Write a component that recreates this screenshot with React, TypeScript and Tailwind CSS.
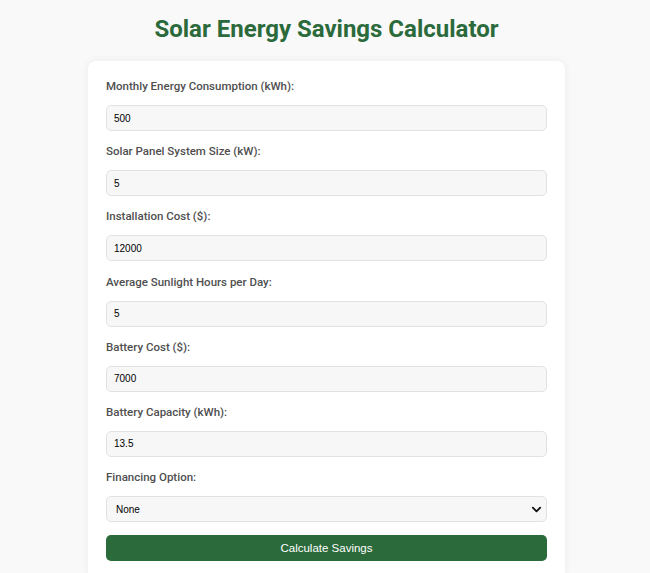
import React, { useState } from 'react';

const fields = [
    { id: 'consumption', label: 'Monthly Energy Consumption (kWh):', value: '500' },
    { id: 'size', label: 'Solar Panel System Size (kW):', value: '5' },
    { id: 'cost', label: 'Installation Cost ($):', value: '12000' },
    { id: 'sunlight', label: 'Average Sunlight Hours per Day:', value: '5' },
    { id: 'battery', label: 'Battery Cost ($):', value: '7000' },
    { id: 'capacity', label: 'Battery Capacity (kWh):', value: '13.5' },
];

const App: React.FC = () => {
    const [values, setValues] = useState<Record<string, string>>(
        Object.fromEntries(fields.map((f) => [f.id, f.value]))
    );
    const [financing, setFinancing] = useState<string>('none');

    return (
        <div className="min-h-screen bg-[#f9f9f9] pt-[14px] pl-[3px]" style={{ fontFamily: 'Roboto, "Liberation Sans", sans-serif' }}>
            <h1 className="text-center text-[24px] leading-[30px] font-bold text-[#2b6a3b]">Solar Energy Savings Calculator</h1>
            <div className="mx-auto mt-[17px] w-[477px] bg-white rounded-[8px] shadow-[0_0_8px_rgba(0,0,0,0.06)] px-[18px] pt-[17px] pb-[20px]">
                {fields.map((f) => (
                    <div key={f.id} className="mb-[12.2px]">
                        <label htmlFor={f.id} className="block text-[11.5px] leading-[16px] font-medium text-[#4f4f4f] mb-[11px]">{f.label}</label>
                        <input
                            id={f.id}
                            type="number"
                            value={values[f.id]}
                            onChange={(e) => setValues({ ...values, [f.id]: e.target.value })}
                            className="block w-full h-[26px] px-[7px] bg-[#f7f7f7] border border-[#e2e2e2] rounded-[5px] text-[10px] text-black outline-none [appearance:textfield] [&::-webkit-inner-spin-button]:appearance-none"
                            style={{ fontFamily: '"Liberation Sans", Arial, sans-serif' }}
                        />
                    </div>
                ))}
                <div className="mb-[13px]">
                    <label htmlFor="financing" className="block text-[11.5px] leading-[16px] font-medium text-[#4f4f4f] mb-[11px]">Financing Option:</label>
                    <div className="relative">
                        <select
                            id="financing"
                            value={financing}
                            onChange={(e) => setFinancing(e.target.value)}
                            className="block w-full h-[26px] pl-[9px] bg-[#f7f7f7] border border-[#e2e2e2] rounded-[5px] text-[10px] text-black outline-none appearance-none"
                            style={{ fontFamily: '"Liberation Sans", Arial, sans-serif' }}
                        >
                            <option value="none">None</option>
                            <option value="loan">Loan</option>
                            <option value="lease">Lease</option>
                        </select>
                        <svg className="absolute right-[5px] top-[8px] pointer-events-none" width="11" height="11" viewBox="0 0 12 12">
                            <path d="M2 4 L6 8 L10 4" fill="none" stroke="#111" strokeWidth="2" strokeLinecap="round" strokeLinejoin="round" />
                        </svg>
                    </div>
                </div>
                <button
                    type="button"
                    className="block w-full h-[26px] bg-[#2b6a3b] text-white text-[11.5px] rounded-[5px]"
                    style={{ fontFamily: '"Liberation Sans", Arial, sans-serif' }}
                >
                    Calculate Savings
                </button>
            </div>
        </div>
    );
};

export default App;
